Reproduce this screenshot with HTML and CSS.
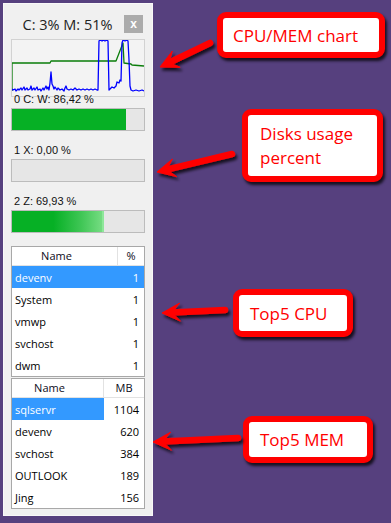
FILE: index.html
```html
<!DOCTYPE html>
<html lang="en">
<head>
  <meta charset="UTF-8" />
  <meta name="viewport" content="width=device-width, initial-scale=1.0"/>
  <title>System Monitor</title>
  <link rel="stylesheet" href="styles.css">
</head>
<body>
  <div class="monitor">
    <div class="head">
      <span class="title">C: 3% M: 51%</span>
      <button class="close">x</button>
    </div>

    <div class="chart">
      <svg viewBox="12 40 132 56" width="132" height="56" preserveAspectRatio="none">
        <polyline class="mem" points="12,91 12,63 50,63 51,61 116,61 123,43 124,63 131,64 132,65 144,66"/>
        <polyline class="cpu" points="12,89 13,90 15,89 16,91 18,89 19,90 21,88 22,90 24,87 25,90 27,88 28,90 30,89 31,86 32,90 34,88 35,90 37,87 38,90 40,89 41,91 43,88 44,90 46,86 47,89 48,87 49,90 50,83 51,72 52,84 53,86 54,89 55,87 57,90 58,88 60,90 62,89 64,91 65,88 66,86 67,89 69,90 71,89 73,90 75,88 77,90 79,89 81,90 83,89 85,90 87,89 89,90 91,89 93,90 95,89 97,90 98,90 99,41 100,40 102,41 103,40 105,41 107,40 108,41 109,90 110,89 112,87 114,88 116,86 117,82 119,83 120,80 121,81 122,43 123,40 125,41 127,40 128,41 129,60 130,86 131,90 133,91 136,90 139,91 142,90 144,91"/>
      </svg>
    </div>

    <div class="disks">
      <div class="disk first">
        <div class="disk-label">0 C: W: 86,42 %</div>
        <div class="bar"><div class="fill" style="width: 86.42%"></div></div>
      </div>
      <div class="disk">
        <div class="disk-label">1 X: 0,00 %</div>
        <div class="bar"><div class="fill" style="width: 0%"></div></div>
      </div>
      <div class="disk">
        <div class="disk-label">2 Z: 69,93 %</div>
        <div class="bar"><div class="fill shine" style="width: 69.93%"></div></div>
      </div>
    </div>

    <table class="procs cpu-list">
      <thead>
        <tr><th class="name-col">Name</th><th class="val-col">%</th></tr>
      </thead>
      <tbody>
        <tr class="selected"><td>devenv</td><td class="num">1</td></tr>
        <tr><td>System</td><td class="num">1</td></tr>
        <tr><td>vmwp</td><td class="num">1</td></tr>
        <tr><td>svchost</td><td class="num">1</td></tr>
        <tr><td>dwm</td><td class="num">1</td></tr>
      </tbody>
    </table>

    <table class="procs mem-list">
      <thead>
        <tr><th class="name-col">Name</th><th class="val-col">MB</th></tr>
      </thead>
      <tbody>
        <tr><td class="picked">sqlservr</td><td class="num">1104</td></tr>
        <tr><td>devenv</td><td class="num">620</td></tr>
        <tr><td>svchost</td><td class="num">384</td></tr>
        <tr><td>OUTLOOK</td><td class="num">189</td></tr>
        <tr><td>Jing</td><td class="num">156</td></tr>
      </tbody>
    </table>
  </div>

  <div class="notes">
    <div class="note note-chart">CPU/MEM chart</div>
    <div class="note note-disks">Disks usage<br>percent</div>
    <div class="note note-cpu">Top5 CPU</div>
    <div class="note note-mem">Top5 MEM</div>
  </div>

  <!-- arrows drawn over everything -->
  <svg class="arrows" viewBox="0 0 391 523" width="391" height="523">
    <defs>
      <filter id="shadow" x="-30%" y="-60%" width="160%" height="220%">
        <feDropShadow dx="2" dy="3" stdDeviation="1.4" flood-color="#000" flood-opacity="0.75"/>
      </filter>
    </defs>
    <g filter="url(#shadow)">
      <line x1="210" y1="43" x2="169" y2="62.7"/>
      <polygon points="160,67 172.3,51.1 169,62.7 180.1,67.3"/>
    </g>
    <g filter="url(#shadow)">
      <line x1="232" y1="154" x2="166.7" y2="169.7"/>
      <polygon points="157,172 172.4,159 166.7,169.7 176.6,176.6"/>
    </g>
    <g filter="url(#shadow)">
      <line x1="225" y1="310" x2="172" y2="312.5"/>
      <polygon points="162,313 179.6,303.1 172,312.5 180.4,321.1"/>
    </g>
    <g filter="url(#shadow)">
      <line x1="238" y1="438" x2="163" y2="441.5"/>
      <polygon points="153,442 170.6,432.2 163,441.5 171.4,450.2"/>
    </g>
  </svg>
</body>
</html>
```

FILE: styles.css
```css
body {
  margin: 0;
  padding: 0;
  width: 391px;
  height: 523px;
  overflow: hidden;
  background-color: #56407e;
  font-family: 'Open Sans', sans-serif;
  display: flex;
  align-items: flex-start;
  position: relative;
}

.monitor {
  box-sizing: border-box;
  width: 150px;
  height: 513px;
  margin: 3px 0 0 3px;
  padding: 0 7px;
  background-color: #f0f0f0;
  border: 1px solid #f8f8f8;
  display: flex;
  flex-direction: column;
}

.head {
  box-sizing: border-box;
  height: 35px;
  padding-top: 5px;
  display: flex;
  align-items: center;
}

.title {
  flex: 1;
  text-align: center;
  font-size: 14.5px;
  color: #222;
  white-space: nowrap;
}

.close {
  width: 19px;
  height: 18px;
  margin-right: 2px;
  padding: 0;
  border: none;
  background-color: #ababab;
  color: #fff;
  font-family: 'Liberation Sans', sans-serif;
  font-weight: bold;
  font-size: 12px;
  line-height: 18px;
}

.chart {
  box-sizing: border-box;
  height: 58px;
  border: 1px solid #d2d2d2;
  background-color: #f3f3f3;
}

.chart svg {
  display: block;
}

.chart polyline {
  fill: none;
  stroke-width: 1.3;
  stroke-linejoin: round;
}

.chart .mem {
  stroke: #0a7d0a;
}

.chart .cpu {
  stroke: #0000ff;
}

.disk-label {
  box-sizing: border-box;
  height: 28px;
  padding-bottom: 3px;
  padding-left: 3px;
  display: flex;
  align-items: flex-end;
  font-family: 'Liberation Sans', sans-serif;
  font-size: 11px;
  line-height: 12px;
  color: #111;
  white-space: nowrap;
}

.disk.first .disk-label {
  height: 11px;
}

.bar {
  box-sizing: border-box;
  height: 23px;
  border: 1px solid #bcbcbc;
  background-color: #e6e6e6;
}

.fill {
  height: 100%;
  background-color: #06b025;
}

.fill.shine {
  background: linear-gradient(to right, #06b025 0%, #06b025 45%, #3fc655 75%, #7ade86 100%);
  box-shadow: inset -2px 0 0 #8ee79a;
}

.procs {
  width: 134px;
  table-layout: fixed;
  border-collapse: separate;
  border-spacing: 0;
  border: 1px solid #a8a8a8;
  background-color: #fff;
  font-size: 11px;
  color: #000;
}

.cpu-list {
  margin-top: 13px;
}

.mem-list {
  margin-top: 1px;
}

.procs th {
  padding: 0;
  line-height: 18px;
  font-weight: normal;
  border-bottom: 1px solid #e2e2e2;
  color: #0b0b20;
}

.procs .name-col {
  text-align: center;
  padding-right: 16px;
  border-right: 1px solid #e2e2e2;
}

.cpu-list .val-col {
  width: 26px;
}

.mem-list .val-col {
  width: 40px;
}

.procs td {
  padding: 2px 0 0 3px;
  line-height: 20px;
  white-space: nowrap;
  overflow: hidden;
}

.procs td.num {
  text-align: right;
  padding: 2px 5px 0 0;
}

.procs tr.selected td,
.procs td.picked {
  background-color: #3399ff;
  color: #fff;
}

.notes {
  display: flex;
  flex-direction: column;
  align-items: flex-start;
}

.note {
  box-sizing: border-box;
  border: 6px solid #ff0000;
  border-radius: 9px;
  background-color: #fff;
  box-shadow: 2px 3px 3px rgba(0, 0, 0, 0.75);
  color: #ff0000;
  font-size: 17px;
  display: flex;
  align-items: center;
  white-space: nowrap;
}

.note-chart {
  width: 168px;
  height: 46px;
  margin: 12px 0 0 64px;
  padding-left: 10px;
}

.note-disks {
  width: 141px;
  height: 73px;
  margin: 51px 0 0 89px;
  padding-left: 12px;
  line-height: 24px;
}

.note-cpu {
  width: 120px;
  height: 48px;
  margin: 107px 0 0 80px;
  padding-left: 11px;
}

.note-mem {
  width: 130px;
  height: 47px;
  margin: 79px 0 0 90px;
  padding-left: 11px;
}

.arrows {
  position: absolute;
  left: 0;
  top: 0;
  pointer-events: none;
}

.arrows line {
  stroke: #ff0000;
  stroke-width: 6.5;
  stroke-linecap: round;
}

.arrows polygon {
  fill: #ff0000;
  stroke: #ff0000;
  stroke-width: 1;
  stroke-linejoin: round;
}
```
